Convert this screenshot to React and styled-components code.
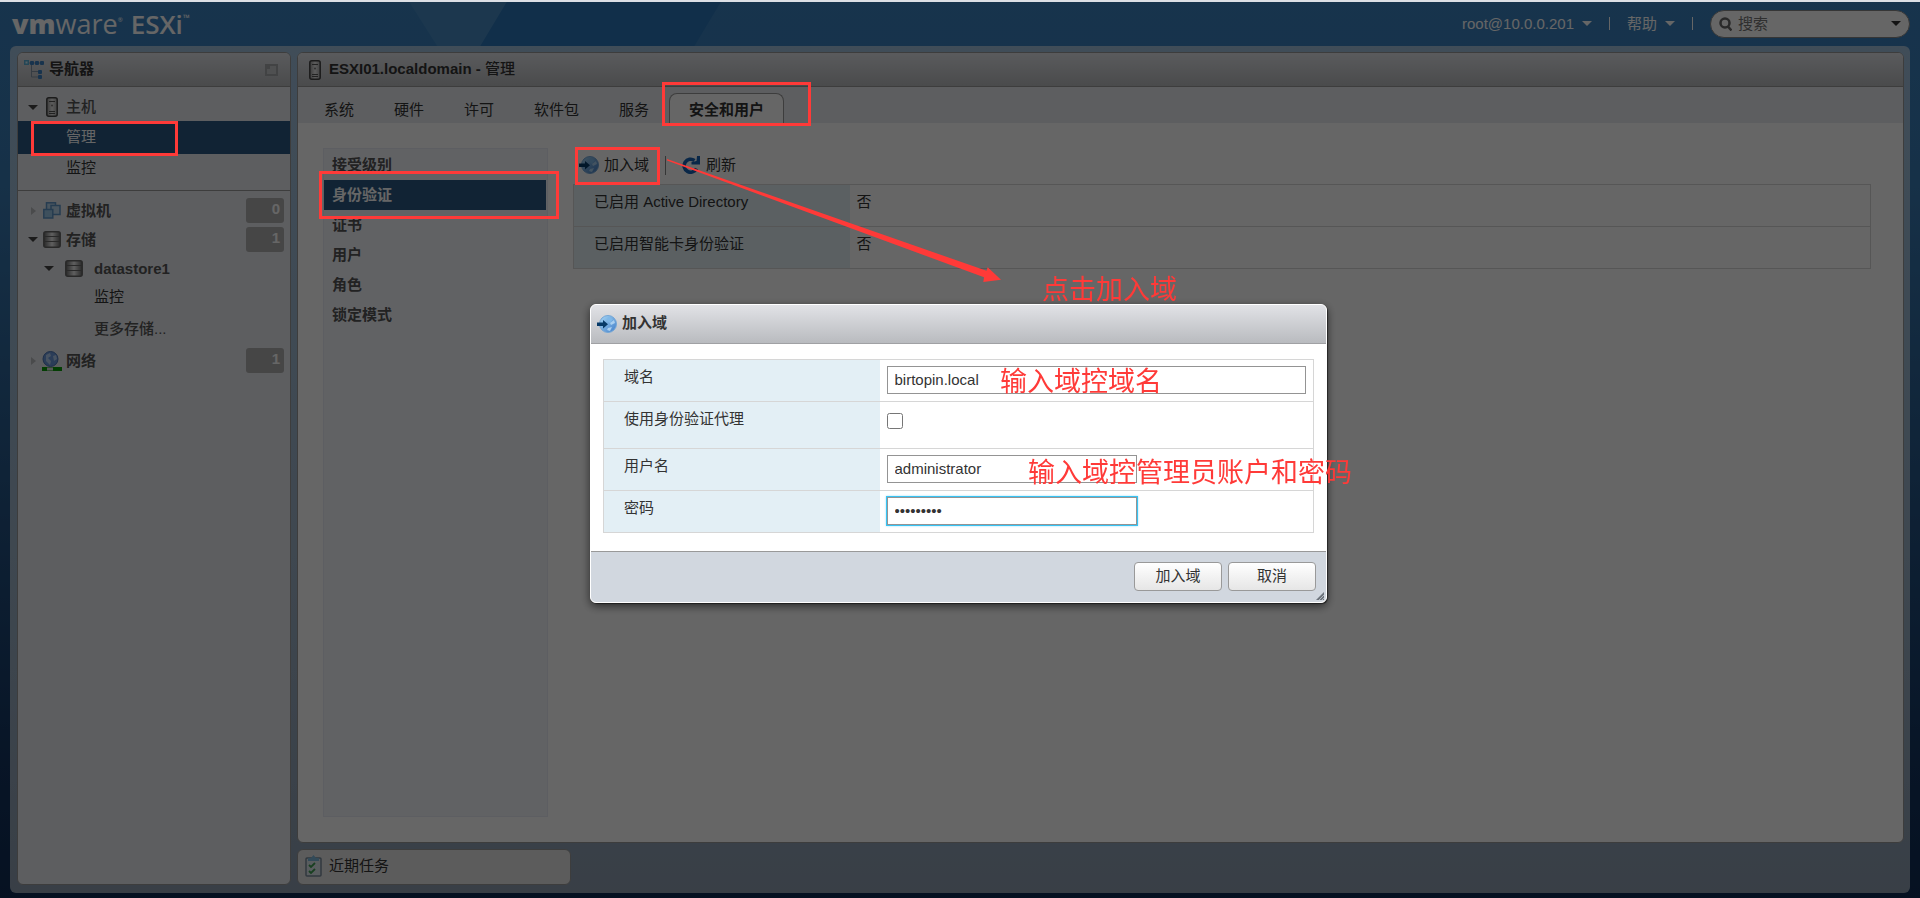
import React from "react";
import styled, { createGlobalStyle, css } from "styled-components";

const GlobalStyle = createGlobalStyle`
  *, *::before, *::after { box-sizing: border-box; }
  body {
    margin: 0;
    font-family: "Liberation Sans", "Noto Sans CJK SC", sans-serif;
    font-size: 15px;
    line-height: 20px;
    color: #333;
  }
  button, input { font: inherit; color: inherit; }
  button { background: none; border: 0; padding: 0; cursor: pointer; }
  ul { list-style: none; margin: 0; padding: 0; }
  a { color: inherit; text-decoration: none; }
  svg { display: block; flex: none; }
`;

const Page = styled.div`
  position: relative;
  min-height: 100vh;
  display: flex;
  flex-direction: column;
  padding: 2px 10px 5px;
  background: linear-gradient(#3a82c0 0, #397bb4 20%, #2b6094 45%, #143560 85%, #0f2c54 100%);
`;

const Facets = styled.svg`
  position: absolute;
  top: 0;
  left: 400px;
`;

const TopEdge = styled.div`
  position: absolute;
  inset: 0 0 auto 0;
  height: 2px;
  background: #dcdfe5;
`;

const Header = styled.header`
  position: relative;
  height: 44px;
  display: flex;
  align-items: center;
  justify-content: space-between;
  padding-bottom: 1px;
  color: #fff;
`;

const Logo = styled.div`
  display: flex;
  align-items: center;
  gap: 8px;
  padding-left: 2px;
  line-height: 32px;
`;

const Brand = styled.span`
  display: flex;
  font-family: "Open Sans", sans-serif;
  font-size: 27px;
  font-weight: 400;
  b { font-weight: 800; }
  sup { font-size: 6px; line-height: 24px; }
`;

const Product = styled(Brand)`
  font-size: 26px;
  font-weight: 600;
  sup { font-size: 9px; line-height: 20px; }
`;

const HeaderTools = styled.nav`
  display: flex;
  align-items: center;
`;

const HeaderButton = styled.button`
  display: flex;
  align-items: center;
  gap: 8px;
`;

const Divider = styled.span`
  width: 1px;
  height: 13px;
  margin: 0 17px;
  background: #fff;
`;

const SearchBox = styled.label`
  display: flex;
  align-items: center;
  gap: 6px;
  width: 200px;
  height: 28px;
  padding: 0 8px;
  border: 1px solid #888;
  border-radius: 14px;
  background: #fff;
  input {
    flex: 1;
    min-width: 0;
    padding: 0;
    border: 0;
    outline: 0;
    background: none;
    color: #333;
  }
  input::placeholder { color: #757575; opacity: 1; }
`;

const Shell = styled.div`
  position: relative;
  flex: 1;
  display: flex;
  gap: 6px;
  padding: 6px 6px 8px 7px;
  border-radius: 6px;
  background: linear-gradient(#a0c0dd, #9db3c8 60%, #8e9eb0);
`;

const Panel = styled.section`
  display: flex;
  flex-direction: column;
  border: 1px solid #999;
  border-radius: 6px;
  overflow: hidden;
  background: ${(p) => p.$tone || "#fff"};
`;

const Sidebar = styled(Panel)`
  width: 274px;
  flex: none;
`;

const MainColumn = styled.div`
  flex: 1;
  min-width: 0;
  display: flex;
  flex-direction: column;
  gap: 6px;
`;

const MainPanel = styled(Panel)`
  flex: 1;
`;

const PanelHeader = styled.header`
  display: flex;
  align-items: center;
  gap: ${(p) => p.$gap || 8}px;
  height: 34px;
  flex: none;
  padding: 0 12px 0 ${(p) => p.$left || 10}px;
  border-bottom: 1px solid #999;
  background: linear-gradient(#e1e3e8, #b9bbbe);
  h2 {
    flex: 1;
    margin: 0;
    padding-bottom: 2px;
    font-size: 15px;
    font-weight: 700;
  }
`;

const Regular = styled.span`
  font-weight: 500;
`;

const TreeGroup = styled.ul`
  padding: ${(p) => p.$top}px 0 6px;
  & + & { border-top: 1px solid #999; }
`;

const TreeRow = styled.li`
  display: flex;
  align-items: center;
  height: ${(p) => p.$height || 29}px;
  padding: 0 6px 0 ${(p) => (p.$level ? 26 : 10)}px;
  color: #555;
  font-weight: ${(p) => (p.$strong ? 700 : 500)};
`;

const Arrow = styled.span`
  width: 10px;
  display: flex;
  justify-content: center;
`;

const IconSlot = styled.span`
  width: ${(p) => p.$width || 28}px;
  display: flex;
  justify-content: center;
`;

const Badge = styled.span`
  width: 38px;
  height: 25px;
  margin-left: auto;
  padding: 1px 4px 0;
  border-radius: 3px;
  background: #afafaf;
  color: #fff;
  font-weight: 700;
  text-align: right;
`;

const TreeLink = styled.a`
  display: flex;
  align-items: center;
  height: ${(p) => p.$height || 33}px;
  padding: 0 0 2px ${(p) => p.$indent}px;
  color: ${(p) => (p.$muted ? "#555" : "#333")};
  font-weight: ${(p) => (p.$muted ? 500 : 400)};
  ${(p) =>
    p.$active &&
    css`
      background: #2b5882;
      color: #fff;
    `}
`;

const TabBar = styled.div`
  display: flex;
  align-items: flex-end;
  height: 36px;
  flex: none;
  padding-left: 6px;
  background: #e8ebf0;
`;

const Tab = styled.button`
  height: 30px;
  padding: 2px 19px 0;
  border: 1px solid transparent;
  border-bottom: 0;
  border-radius: 8px 8px 0 0;
  ${(p) =>
    p.$active &&
    css`
      border-color: #999;
      background: #fff;
      font-weight: 700;
    `}
`;

const Content = styled.div`
  flex: 1;
  display: flex;
  gap: 25px;
  padding: 25px 32px 25px 25px;
`;

const SubNav = styled.nav`
  width: 225px;
  flex: none;
  padding: 1px 1px 1px 0;
  border: 1px solid #e8ebf4;
  background: #f2f4fb;
`;

const SubLink = styled.a`
  display: block;
  height: 30px;
  padding: 5px 8px;
  font-weight: 700;
  color: #555;
  ${(p) =>
    p.$active &&
    css`
      background: #2b5882;
      color: #fff;
    `}
`;

const Detail = styled.div`
  flex: 1;
  min-width: 0;
`;

const Toolbar = styled.div`
  display: flex;
  align-items: center;
  height: 36px;
  padding: 0 0 2px 6px;
`;

const ToolButton = styled.button`
  display: flex;
  align-items: center;
  gap: ${(p) => p.$gap || 5}px;
`;

const ToolDivider = styled.span`
  width: 1px;
  height: 19px;
  margin: 0 16px;
  background: #888;
`;

const Grid = styled.table`
  width: 100%;
  border-collapse: collapse;
  border: 1px solid #d6d6d6;
  th {
    width: ${(p) => p.$labelWidth}px;
    padding: 7px 20px;
    background: #e3eff5;
    font-weight: 400;
    text-align: left;
    vertical-align: top;
  }
  td { padding: 7px; vertical-align: top; }
  tr { height: 42px; border-bottom: 1px solid #d6d6d6; }
`;

const TaskBar = styled(Panel)`
  width: 274px;
  height: 36px;
  flex-direction: row;
  align-items: center;
  gap: 7px;
  padding: 0 0 2px 7px;
`;

const Backdrop = styled.div`
  position: fixed;
  inset: 2px 0 0 0;
  display: flex;
  align-items: center;
  justify-content: center;
  padding: 6px 3px 0 0;
  background: rgba(0, 0, 0, 0.6);
`;

const DialogFrame = styled.div`
  border-radius: 6px;
  box-shadow: 1px 1px 1px rgba(0, 0, 0, 0.5), 0 3px 10px rgba(0, 0, 0, 0.6);
`;

const Dialog = styled.div`
  position: relative;
  width: 737px;
  border: 1px solid #fff;
  border-radius: 6px;
  overflow: hidden;
  background: #fff;
`;

const DialogHeader = styled.header`
  display: flex;
  align-items: center;
  gap: 5px;
  height: 39px;
  padding-left: 6px;
  border-bottom: 1px solid #a0a1a4;
  background: linear-gradient(#e1e2e6, #b9bbbf);
  h2 {
    margin: 0;
    padding-bottom: 2px;
    font-size: 15px;
    font-weight: 700;
  }
`;

const DialogBody = styled.div`
  padding: 15px 12px 18px;
`;

const FormTable = styled(Grid)`
  td { padding: 6px 7px; }
`;

const FormRow = styled.tr`
  && { height: ${(p) => p.$height || 42}px; }
`;

const TextInput = styled.input`
  display: block;
  width: ${(p) => (p.$wide ? "100%" : "250px")};
  height: 28px;
  padding: 0 7px;
  border: 1px solid #949494;
  border-radius: 0;
  outline: 0;
  background: #fff;
  ${(p) => p.$focused && css`box-shadow: 0 0 0 1px #38c4f4, 0 0 2px 1px #9fe2fa;`}
`;

const CheckInput = styled.input`
  display: block;
  width: 16px;
  height: 16px;
  margin: 5px 0;
`;

const DialogFooter = styled.footer`
  display: flex;
  justify-content: flex-end;
  gap: 6px;
  height: 51px;
  padding: 10px;
  border-top: 1px solid #999;
  background: #d1d7df;
`;

const DialogButton = styled.button`
  width: 88px;
  height: 29px;
  border: 1px solid #999;
  border-radius: 4px;
  background: linear-gradient(#fff, #e6e6e6);
`;

const ResizeHandle = styled.svg`
  position: absolute;
  right: 2px;
  bottom: 2px;
`;

const Annotations = styled.div`
  position: absolute;
  inset: 0;
  pointer-events: none;
`;

const Mark = styled.span`
  position: absolute;
  left: ${(p) => p.$x}px;
  top: ${(p) => p.$y}px;
  width: ${(p) => p.$w}px;
  height: ${(p) => p.$h}px;
  border: 3px solid #ff3a38;
`;

const Note = styled.span`
  position: absolute;
  left: ${(p) => p.$x}px;
  top: ${(p) => p.$y}px;
  color: #ff3a38;
  font-size: 27px;
  line-height: 36px;
  white-space: nowrap;
`;

const Pointer = styled.svg`
  position: absolute;
  left: 660px;
  top: 150px;
`;

const Caret = ({ fill = "#fff" }) => (
  <svg width="10" height="5" viewBox="0 0 10 5"><path d="M0 0h10L5 5z" fill={fill} /></svg>
);

const Closed = () => (
  <svg width="5" height="8" viewBox="0 0 5 8"><path d="M0 0l5 4-5 4z" fill="#b9bbbe" /></svg>
);

const HostIcon = () => (
  <svg width="12" height="20" viewBox="0 0 12 20">
    <defs>
      <linearGradient id="tower">
        <stop offset="0" stopColor="#999" /><stop offset=".5" stopColor="#e6e6e6" /><stop offset="1" stopColor="#aaa" />
      </linearGradient>
    </defs>
    <rect x=".8" y=".8" width="10.400" height="18.400" rx="2" fill="url(#tower)" stroke="#444" strokeWidth="1.500" />
    <path d="M3 4.500h6M3 14.500h6M3 16.500h6" stroke="#555" />
    <circle cx="6" cy="8.500" r="1" fill="#777" />
  </svg>
);

const StoreIcon = () => (
  <svg width="18" height="17" viewBox="0 0 18 17">
    <defs>
      <linearGradient id="metal">
        <stop offset="0" stopColor="#666" /><stop offset=".5" stopColor="#eee" /><stop offset="1" stopColor="#666" />
      </linearGradient>
    </defs>
    <rect x=".8" y=".8" width="16.400" height="15.400" rx="2" fill="url(#metal)" stroke="#666" strokeWidth="1.500" />
    <path d="M1 5.500h16M1 10.500h16" stroke="#666" />
  </svg>
);

const VmIcon = () => (
  <svg width="18" height="17" viewBox="0 0 18 17" stroke="#5f96c8">
    <rect x="3.500" y=".8" width="9" height="9" fill="#b9d6ee" strokeWidth="1.500" />
    <rect x="8" y="3.500" width="9" height="9" fill="#bcd8ee" strokeWidth="1.500" />
    <rect x=".8" y="7.500" width="9" height="8.500" fill="#9cc8e8" strokeWidth="1.500" />
  </svg>
);

const NetIcon = () => (
  <svg width="20" height="20" viewBox="0 0 20 20">
    <path d="M0 18h20" stroke="#0a9b0a" strokeWidth="4" />
    <path d="M5 18h6" stroke="#ddd" strokeWidth="3" />
    <circle cx="8.500" cy="8" r="7.500" fill="#6c98dc" stroke="#4b74b4" />
    <path d="M4 4l4-2 1 3-3 2 3 3-1 4-4-4zM11 5l3-1 1 4-3 2z" fill="#b4cff2" />
  </svg>
);

const NavIcon = () => (
  <svg width="20" height="19" viewBox="0 0 20 19">
    <path d="M5 3h12M7.500 5v12H14M7.500 11.500H14" fill="none" stroke="#8797a8" />
    <path d="M0 0h5v5H0z" fill="#5ab0d8" />
    <path d="M1.500 1.500h2v2h-2z" fill="#d4eefa" />
    <g fill="#3d80c0">
      <rect x="6" y="1" width="4" height="4" rx="1" /><rect x="11" y="1" width="4" height="4" rx="1" />
      <rect x="16" y="1" width="4" height="4" rx="1" /><rect x="14" y="10" width="4" height="4" rx="1" />
      <rect x="14" y="15" width="4" height="4" rx="1" />
    </g>
  </svg>
);

const DockIcon = () => (
  <svg width="13" height="12" viewBox="0 0 13 12">
    <rect x="1" y="1" width="11" height="10" fill="#c5c7ca" stroke="#a6a8ab" strokeWidth="2" />
    <path d="M1 1h4v4H1z" fill="#a6a8ab" />
  </svg>
);

const JoinIcon = () => (
  <svg width="20" height="18" viewBox="0 0 20 18">
    <defs>
      <linearGradient id="globe" x1="0" y1="0" x2="1" y2="1">
        <stop offset="0" stopColor="#a8d8f6" /><stop offset="1" stopColor="#3f7cc8" />
      </linearGradient>
    </defs>
    <circle cx="11" cy="9" r="8.500" fill="url(#globe)" stroke="#74a6d6" />
    <path d="M11 2l5 2-3 4-3-2z" fill="#7fb8e8" />
    <path d="M13 8l4-3 1 3-4 2zM11 13l4-1-2 4-3-1z" fill="#a9cff0" />
    <path d="M0 7.500h6V5l5 4.300-5 4.200v-2.500H0z" fill="#073a68" />
  </svg>
);

const RefreshIcon = () => (
  <svg width="18" height="18" viewBox="0 0 18 18">
    <path d="M14.500 12.500A6.500 6.500 0 1 1 12.500 4.500" fill="none" stroke="#1763b4" strokeWidth="3.600" />
    <path d="M18 0v8.500H9.500V6l5-1 .5-5z" fill="#1763b4" />
  </svg>
);

const SearchIcon = () => (
  <svg width="13" height="14" viewBox="0 0 13 14" fill="none" stroke="#666" strokeWidth="2.500">
    <circle cx="6" cy="6" r="4.500" /><path d="M9 9.500l3.500 4" />
  </svg>
);

const TaskIcon = () => (
  <svg width="17" height="22" viewBox="0 0 17 22">
    <rect x="1" y="3" width="15" height="18" rx="1" fill="#dfe8ee" stroke="#7b8c9c" strokeWidth="1.500" />
    <path d="M3 3h3l2.500-3L11 3h3v3H3z" fill="#7db8dc" />
    <path d="M4 10l2 2 4-4M4 16l2 2 4-4" fill="none" stroke="#3f9f52" strokeWidth="1.800" />
  </svg>
);

const TABS = ["系统", "硬件", "许可", "软件包", "服务", "安全和用户"];
const SECTIONS = ["接受级别", "身份验证", "证书", "用户", "角色", "锁定模式"];

export default function App() {
  return (
    <>
      <GlobalStyle />
      <Page>
        <Facets width="340" height="60" viewBox="0 0 340 60" aria-hidden="true">
          <path d="M8 0h100L72 60H46z" fill="#468bc4" />
          <path d="M108 0h214l-36 60H72z" fill="#2c75b8" />
        </Facets>
        <TopEdge />
        <Header>
          <Logo>
            <Brand><b>vm</b>ware<sup>®</sup></Brand>
            <Product>ESXi<sup>™</sup></Product>
          </Logo>
          <HeaderTools>
            <HeaderButton>root@10.0.0.201 <Caret /></HeaderButton>
            <Divider />
            <HeaderButton>帮助 <Caret /></HeaderButton>
            <Divider />
            <SearchBox>
              <SearchIcon />
              <input type="text" placeholder="搜索" aria-label="搜索" />
              <Caret fill="#333" />
            </SearchBox>
          </HeaderTools>
        </Header>

        <Shell>
          <Sidebar $tone="#e8ebf0">
            <PanelHeader $left={6} $gap={5}>
              <NavIcon />
              <h2>导航器</h2>
              <DockIcon />
            </PanelHeader>
            <TreeGroup $top={6}>
              <TreeRow $height={28}>
                <Arrow><Caret fill="#444" /></Arrow>
                <IconSlot><HostIcon /></IconSlot>
                主机
              </TreeRow>
              <li><TreeLink href="#manage" $indent={48} $active>管理</TreeLink></li>
              <li><TreeLink href="#monitor" $indent={48} $height={30}>监控</TreeLink></li>
            </TreeGroup>
            <TreeGroup $top={5}>
              <TreeRow $strong>
                <Arrow><Closed /></Arrow>
                <IconSlot><VmIcon /></IconSlot>
                虚拟机
                <Badge>0</Badge>
              </TreeRow>
              <TreeRow $strong>
                <Arrow><Caret fill="#444" /></Arrow>
                <IconSlot><StoreIcon /></IconSlot>
                存储
                <Badge>1</Badge>
              </TreeRow>
              <TreeRow $strong $level={1}>
                <Arrow><Caret fill="#444" /></Arrow>
                <IconSlot $width={40}><StoreIcon /></IconSlot>
                datastore1
              </TreeRow>
              <li><TreeLink href="#ds-monitor" $indent={76} $height={30}>监控</TreeLink></li>
              <li><TreeLink href="#more" $indent={76} $height={33} $muted>更多存储...</TreeLink></li>
              <TreeRow $strong>
                <Arrow><Closed /></Arrow>
                <IconSlot><NetIcon /></IconSlot>
                网络
                <Badge>1</Badge>
              </TreeRow>
            </TreeGroup>
          </Sidebar>

          <MainColumn>
            <MainPanel>
              <PanelHeader $left={11}>
                <HostIcon />
                <h2>ESXI01.localdomain - <Regular>管理</Regular></h2>
              </PanelHeader>
              <TabBar>
                {TABS.map((t) => (
                  <Tab key={t} $active={t === "安全和用户"}>{t}</Tab>
                ))}
              </TabBar>
              <Content>
                <SubNav>
                  {SECTIONS.map((s) => (
                    <SubLink key={s} href={"#" + s} $active={s === "身份验证"}>{s}</SubLink>
                  ))}
                </SubNav>
                <Detail>
                  <Toolbar>
                    <ToolButton><JoinIcon />加入域</ToolButton>
                    <ToolDivider />
                    <ToolButton $gap={6}><RefreshIcon />刷新</ToolButton>
                  </Toolbar>
                  <Grid $labelWidth={276}>
                    <tbody>
                      <tr><th scope="row">已启用 Active Directory</th><td>否</td></tr>
                      <tr><th scope="row">已启用智能卡身份验证</th><td>否</td></tr>
                    </tbody>
                  </Grid>
                </Detail>
              </Content>
            </MainPanel>
            <TaskBar $tone="#e6e6e6">
              <TaskIcon />
              近期任务
            </TaskBar>
          </MainColumn>
        </Shell>

        <Backdrop>
          <DialogFrame>
            <Dialog role="dialog" aria-labelledby="join-title">
              <DialogHeader>
                <JoinIcon />
                <h2 id="join-title">加入域</h2>
              </DialogHeader>
              <DialogBody>
                <FormTable $labelWidth={276}>
                  <tbody>
                    <FormRow>
                      <th scope="row"><label htmlFor="domain">域名</label></th>
                      <td><TextInput id="domain" type="text" defaultValue="birtopin.local" $wide /></td>
                    </FormRow>
                    <FormRow $height={47}>
                      <th scope="row"><label htmlFor="proxy">使用身份验证代理</label></th>
                      <td><CheckInput id="proxy" type="checkbox" /></td>
                    </FormRow>
                    <FormRow>
                      <th scope="row"><label htmlFor="user">用户名</label></th>
                      <td><TextInput id="user" type="text" defaultValue="administrator" /></td>
                    </FormRow>
                    <FormRow>
                      <th scope="row"><label htmlFor="password">密码</label></th>
                      <td><TextInput id="password" type="password" defaultValue="password1" $focused /></td>
                    </FormRow>
                  </tbody>
                </FormTable>
              </DialogBody>
              <DialogFooter>
                <DialogButton>加入域</DialogButton>
                <DialogButton>取消</DialogButton>
              </DialogFooter>
              <ResizeHandle width="8" height="8" viewBox="0 0 8 8" aria-hidden="true">
                <path d="M0 8L8 0v8z" fill="#6d747c" />
                <path d="M3 8l5-5M6 8l2-2" stroke="#d1d7df" strokeWidth=".7" />
              </ResizeHandle>
            </Dialog>
          </DialogFrame>
        </Backdrop>

        <Annotations>
          <Mark $x={31} $y={121} $w={147} $h={35} />
          <Mark $x={662} $y={82} $w={149} $h={44} />
          <Mark $x={319} $y={171} $w={240} $h={48} />
          <Mark $x={575} $y={147} $w={85} $h={38} />
          <Pointer width="345" height="140" viewBox="660 150 345 140" aria-hidden="true">
            <path d="M667 159L986.500 270.800 987.700 267.300 1001 279.700 983.300 282 984 277.300 667 160.500z" fill="#ff3a38" />
          </Pointer>
          <Note $x={1042} $y={272}>点击加入域</Note>
          <Note $x={1000} $y={364}>输入域控域名</Note>
          <Note $x={1028} $y={455}>输入域控管理员账户和密码</Note>
        </Annotations>
      </Page>
    </>
  );
}
